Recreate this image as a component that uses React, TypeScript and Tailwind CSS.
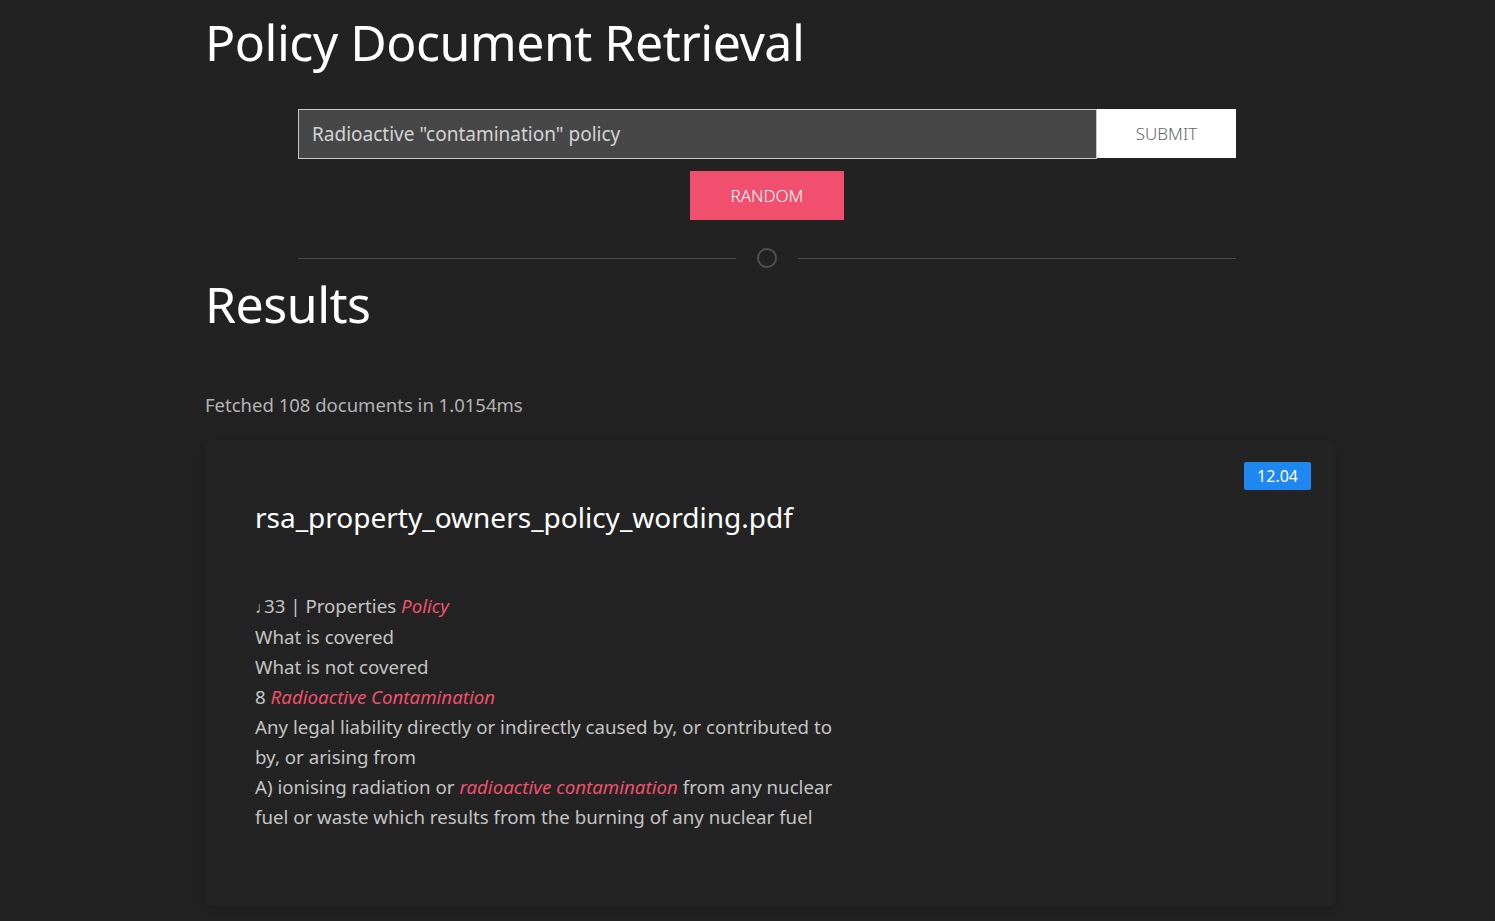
import React from 'react';

const font = { fontFamily: '"Noto Sans", "Open Sans", sans-serif' };

function Hl({ children }: { children: React.ReactNode }) {
  return <em className="italic text-[#f0506e]">{children}</em>;
}

export default function App() {
  return (
    <div className="min-h-screen bg-[#222222] text-white" style={font}>
      <div className="ml-[205px] w-[1130px]">
        <h1 className="pt-[8px] text-[50px] leading-[68px] tracking-[-0.5px] font-normal text-white">
          Policy Document Retrieval
        </h1>

        <form className="ml-[93px] mt-[33px] flex w-[938px] flex-col items-center" onSubmit={(e) => e.preventDefault()}>
          <div className="flex w-full">
            <input
              className="h-[50px] flex-1 border border-[#c8c8c8] bg-[#474747] px-[13px] text-[19px] text-[#d4d4d4] outline-none"
              defaultValue='Radioactive "contamination" policy'
            />
            <button className="h-[49px] w-[139px] bg-white text-[17px] font-light uppercase text-[#666]">Submit</button>
          </div>
          <button
            type="button"
            className="mt-[12px] h-[49px] w-[154px] bg-[#f0506e] text-[17px] font-light uppercase text-white"
          >
            Random
          </button>
          <div className="mt-[28px] flex w-full items-center">
            <div className="h-px flex-1 bg-[#4a4a4a]" />
            <div className="mx-[21px] h-[20px] w-[20px] rounded-full border-2 border-[#4f4f4f]" />
            <div className="h-px flex-1 bg-[#4a4a4a]" />
          </div>
        </form>

        <h2 className="mt-[2px] text-[50px] leading-[68px] tracking-[-0.5px] font-normal text-white">Results</h2>

        <p className="mt-[53px] text-[18.5px] text-[#b4b4b4]">Fetched 108 documents in 1.0154ms</p>

        <div className="relative mt-[21px] rounded-[6px] bg-[#232323] px-[50px] pt-[57px] pb-[74px] shadow-[0_4px_16px_rgba(0,0,0,0.18)]">
          <span className="absolute right-[24px] top-[22px] rounded-[2px] bg-[#1e87f0] px-[13px] text-[16px] leading-[28px] text-white">
            12.04
          </span>
          <h3 className="text-[28px] leading-[40px] font-normal text-white">
            rsa_property_owners_policy_wording.pdf
          </h3>
          <div className="mt-[54px] w-[600px] text-[18.7px] leading-[30px] text-[#c4c4c4]">
            <div>
              <span className="inline-block w-[9px] text-[16px]">♩</span>33 | Properties <Hl>Policy</Hl>
            </div>
            <div>What is covered</div>
            <div>What is not covered</div>
            <div>
              8 <Hl>Radioactive Contamination</Hl>
            </div>
            <div>Any legal liability directly or indirectly caused by, or contributed to by, or arising from</div>
            <div>
              A) ionising radiation or <Hl>radioactive contamination</Hl> from any nuclear fuel or waste which results
              from the burning of any nuclear fuel
            </div>
          </div>
        </div>
      </div>
    </div>
  );
}
